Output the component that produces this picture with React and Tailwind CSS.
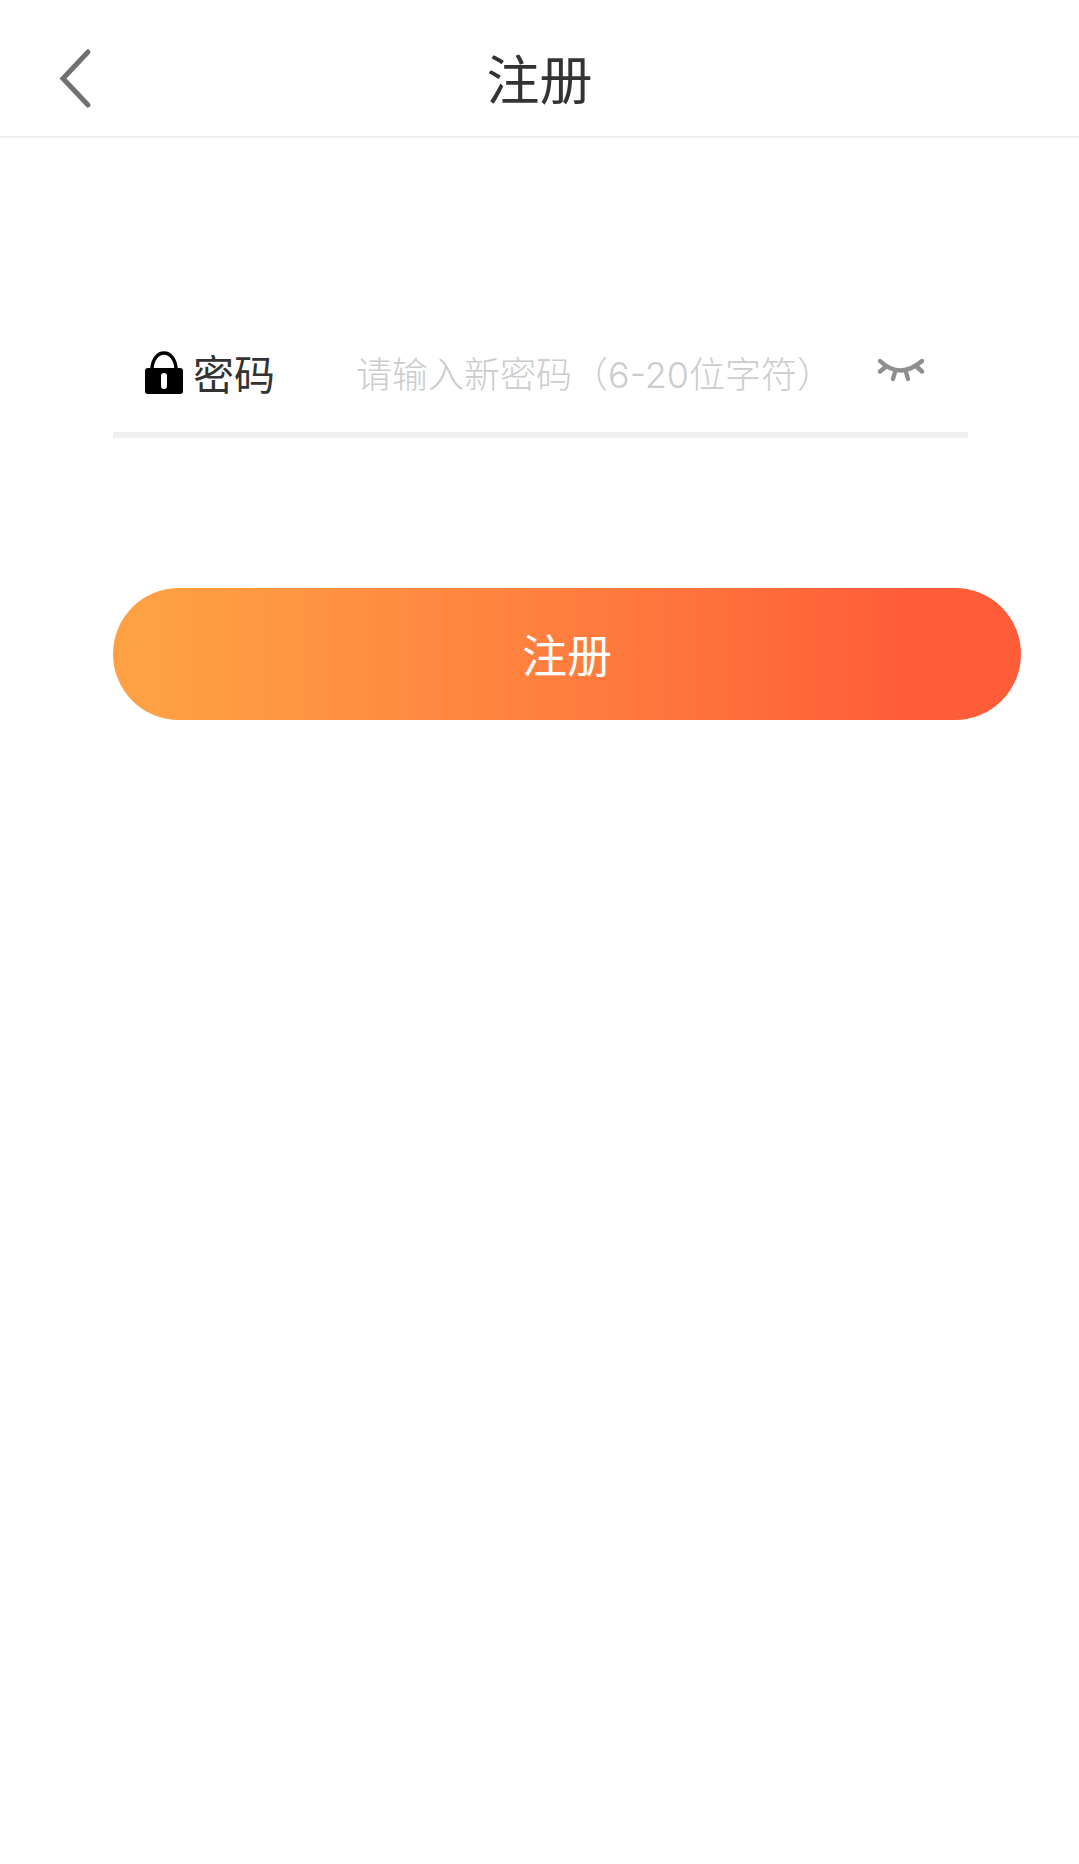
export default function App() {
  const cjk = { fontFamily: '"Noto Sans CJK SC", "Liberation Sans", sans-serif' };
  const mixed = { fontFamily: 'Inter, "Noto Sans CJK SC", sans-serif' };
  return (
    <div className="relative w-[1079px] h-[1864px] bg-white overflow-hidden" style={cjk}>
      <div className="absolute left-[710px] top-0 w-[2px] h-[2px] bg-[#888]" />
      <header className="relative flex items-center justify-center h-[138px] border-b-2 border-[#eeeeee] bg-white">
        <svg className="absolute left-[56px] top-[46px]" width="40" height="66" viewBox="0 0 40 66" fill="none">
          <path d="M32 6 L7 32.5 L32 59" stroke="#707070" strokeWidth="5" strokeLinecap="round" strokeLinejoin="miter" />
        </svg>
        <h1 className="text-[53px] leading-none font-normal text-[#333333] pt-[19px]">注册</h1>
      </header>
      <main className="ml-[113px] flex flex-col items-start">
        <div className="mt-[174px] w-[855px] h-[126px] border-b-[6px] border-[#f0f0f0] flex items-center">
          <svg className="ml-[32px] shrink-0" width="38" height="44" viewBox="0 0 38 44">
            <path d="M7 19 A12 16 0 0 1 31 19" fill="none" stroke="#000" strokeWidth="3.4" />
            <path fillRule="evenodd" d="M3 18 H35 A3 3 0 0 1 38 21 V41 A3 3 0 0 1 35 44 H3 A3 3 0 0 1 0 41 V21 A3 3 0 0 1 3 18 Z M19 23 A3 3 0 0 0 16 26 V36 A3 3 0 0 0 22 36 V26 A3 3 0 0 0 19 23 Z" fill="#000" />
          </svg>
          <span className="ml-[10px] w-[82px] shrink-0 text-[41px] leading-none text-[#333333]">密码</span>
          <input
            type="text"
            placeholder="请输入新密码（6-20位字符）"
            style={mixed}
            className="ml-[81px] w-[500px] shrink-0 mt-[5px] text-[36px] leading-none bg-transparent outline-none placeholder:text-[#cccccc] font-light"
          />
          <svg className="ml-[20px] shrink-0 -mt-[4px]" width="50" height="26" viewBox="0 0 50 26" fill="none" stroke="#8e8e8e" strokeWidth="4.4" strokeLinecap="round">
            <path d="M4 4 Q24 23 46 4" />
            <path d="M9.5 10 L4 14.5" />
            <path d="M19 15 L17 22" />
            <path d="M30 15 L32 22" />
            <path d="M41 10 L46 14.5" />
          </svg>
        </div>
        <button className="mt-[150px] w-[908px] h-[132px] rounded-full flex items-center justify-center pb-[2px] text-white text-[45px] leading-none bg-gradient-to-r from-[#ffa044] from-[5%] to-[#ff5c39] to-[88%]">
          注册
        </button>
      </main>
    </div>
  );
}
